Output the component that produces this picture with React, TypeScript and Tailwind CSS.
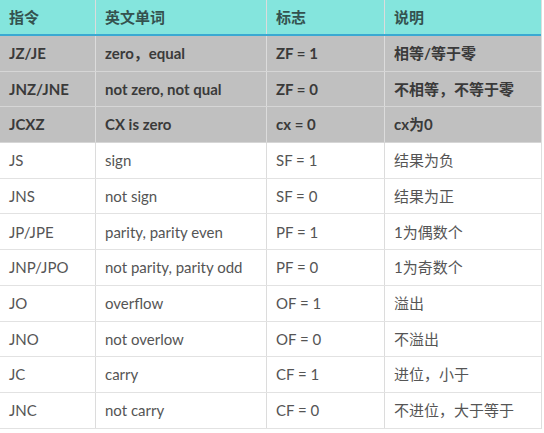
import React from "react";

type Row = { cmd: string; en: string; flag: string; desc: string; hl?: boolean };

const rows: Row[] = [
  { cmd: "JZ/JE", en: "zero，equal", flag: "ZF = 1", desc: "相等/等于零", hl: true },
  { cmd: "JNZ/JNE", en: "not zero, not qual", flag: "ZF = 0", desc: "不相等，不等于零", hl: true },
  { cmd: "JCXZ", en: "CX is zero", flag: "cx = 0", desc: "cx为0", hl: true },
  { cmd: "JS", en: "sign", flag: "SF = 1", desc: "结果为负" },
  { cmd: "JNS", en: "not sign", flag: "SF = 0", desc: "结果为正" },
  { cmd: "JP/JPE", en: "parity, parity even", flag: "PF = 1", desc: "1为偶数个" },
  { cmd: "JNP/JPO", en: "not parity, parity odd", flag: "PF = 0", desc: "1为奇数个" },
  { cmd: "JO", en: "overflow", flag: "OF = 1", desc: "溢出" },
  { cmd: "JNO", en: "not overlow", flag: "OF = 0", desc: "不溢出" },
  { cmd: "JC", en: "carry", flag: "CF = 1", desc: "进位，小于" },
  { cmd: "JNC", en: "not carry", flag: "CF = 0", desc: "不进位，大于等于" },
];

const cols = "grid grid-cols-[96px_171px_118px_156px]";
const cell = "flex items-center px-[9px] border-r border-[#dcdcdc] last:border-r-0";

const App: React.FC = () => {
  return (
    <div className="w-[544px] h-[433px] bg-white overflow-hidden font-['Lato','Noto_Sans_CJK_SC',sans-serif] text-[15px]">
      <div className="w-[542px] border-r border-[#dedede]">
        {/* header */}
        <div className={`${cols} h-[36px] bg-[#84e5dd] border-b-2 border-[#3aa9d2] font-bold text-[#34524f]`}>
          <div className={`${cell} border-[#a9ece7]`}>指令</div>
          <div className={`${cell} border-[#a9ece7]`}>英文单词</div>
          <div className={`${cell} border-[#a9ece7]`}>标志</div>
          <div className={`${cell} border-[#a9ece7]`}>说明</div>
        </div>
        {rows.map((r) => (
          <div
            key={r.cmd}
            className={`${cols} h-[35.7px] border-b ${
              r.hl
                ? "bg-[#c0c0c0] border-[#d6d6d6] font-bold text-[#3a3a3a]"
                : "bg-white border-[#e2e2e2] text-[#555]"
            }`}
          >
            <div className={cell}>{r.cmd}</div>
            <div className={cell}>{r.en}</div>
            <div className={cell}>{r.flag}</div>
            <div className={cell}>{r.desc}</div>
          </div>
        ))}
      </div>
    </div>
  );
};

export default App;
